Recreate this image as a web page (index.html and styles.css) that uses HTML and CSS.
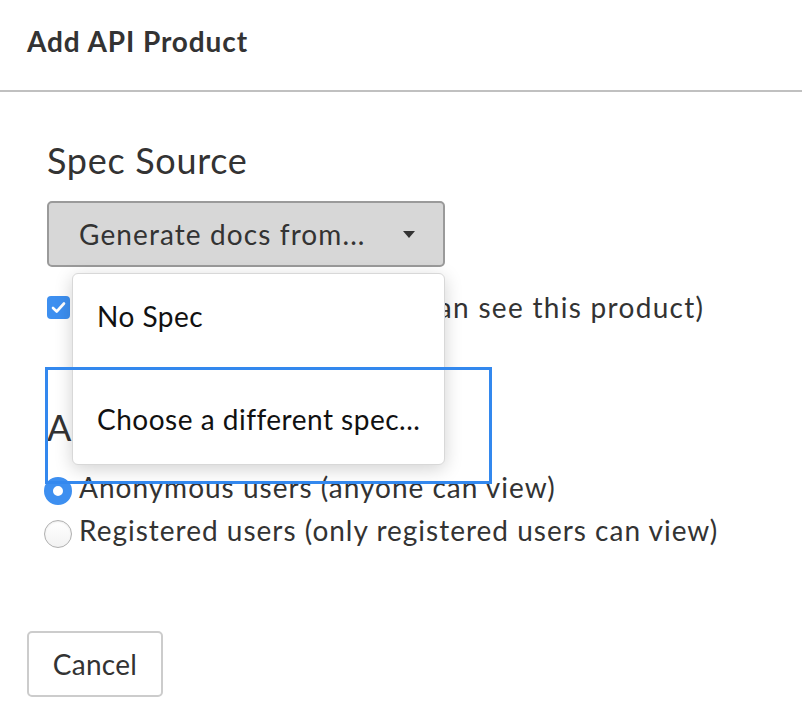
FILE: index.html
```html
<!DOCTYPE html>
<html lang="en">
<head>
<meta charset="utf-8">
<title>Add API Product</title>
<link rel="stylesheet" href="styles.css">
</head>
<body>
<div class="dialog">
  <header class="dialog-header">
    <h1 class="dialog-title">Add API Product</h1>
  </header>
  <main class="dialog-body">
    <h2 class="section-title">Spec Source</h2>
    <div class="select-wrap">
      <button class="select-btn" type="button">
        <span class="select-label">Generate docs from...</span>
        <span class="caret"></span>
      </button>
      <ul class="menu">
        <li class="menu-item">No Spec</li>
        <li class="menu-item menu-item-last">Choose a different spec...</li>
      </ul>
    </div>
    <label class="check-row">
      <span class="checkbox">
        <svg viewBox="0 0 23 23" width="23" height="23"><path d="M6 12 L9.7 15.5 L17 7.5" fill="none" stroke="#fff" stroke-width="2.6" stroke-linecap="round" stroke-linejoin="round"/></svg>
      </span>
      <span class="row-text check-text">Published (portal visitors can see this product)</span>
    </label>
    <h2 class="section-title audience-title">Audience</h2>
    <div class="radio-row">
      <span class="radio radio-on"></span>
      <span class="row-text">Anonymous users (anyone can view)</span>
    </div>
    <div class="radio-row">
      <span class="radio"></span>
      <span class="row-text">Registered users (only registered users can view)</span>
    </div>
  </main>
  <footer class="dialog-footer">
    <button class="btn-cancel" type="button">Cancel</button>
  </footer>
  <div class="focus-ring"></div>
</div>
</body>
</html>
```
FILE: styles.css
```css
* { box-sizing: border-box; }
html, body { margin: 0; padding: 0; background: #fff; }
body {
  font-family: Lato, "Open Sans", "Liberation Sans", sans-serif;
  color: #333;
  width: 802px;
  height: 720px;
  overflow: hidden;
}
.dialog { position: relative; height: 720px; }
.dialog-header {
  height: 92px;
  padding: 24px 27px 0;
  border-bottom: 2px solid #c0c0c0;
}
.dialog-title {
  margin: 0;
  font-size: 28px;
  line-height: 34px;
  font-weight: 700;
  letter-spacing: 0.9px;
  color: #333;
}
.dialog-body { padding: 0 47px; }
.section-title {
  margin: 46px 0 19px;
  font-size: 36px;
  line-height: 44px;
  font-weight: 400;
  letter-spacing: 0.7px;
  color: #333;
}
.select-wrap { position: relative; width: 398px; }
.select-btn {
  display: flex;
  align-items: center;
  justify-content: space-between;
  width: 398px;
  height: 66px;
  padding: 0 28px 0 30px;
  background: #d7d7d7;
  border: 2px solid #9a9a9a;
  border-radius: 5px;
  font-family: inherit;
  font-size: 28px;
  line-height: 34px;
  letter-spacing: 1.1px;
  color: #333;
}
.caret {
  width: 0; height: 0;
  border-left: 6px solid transparent;
  border-right: 6px solid transparent;
  border-top: 7px solid #333;
}
.menu {
  position: absolute;
  left: 25px;
  top: 72px;
  width: 373px;
  margin: 0;
  padding: 0;
  list-style: none;
  background: #fff;
  border: 1px solid #d8d8d8;
  border-radius: 6px;
  box-shadow: 0 4px 18px rgba(0,0,0,0.18);
  z-index: 5;
}
.menu-item {
  padding: 25px 24px 44px;
  font-size: 28px;
  line-height: 34px;
  letter-spacing: 0.5px;
  white-space: nowrap;
  color: #111;
}
.menu-item-last { padding-bottom: 28px; }
.check-row {
  display: flex;
  align-items: center;
  gap: 10px;
  margin-top: 20px;
  height: 40px;
}
.checkbox {
  display: flex;
  width: 23px; height: 23px;
  border-radius: 4px;
  background: #3d8ff0;
}
.row-text {
  font-size: 28px;
  line-height: 40px;
  letter-spacing: 1px;
  color: #333;
  white-space: nowrap;
}
.check-text { letter-spacing: 1.3px; }
.audience-title { margin: 78px 0 16px; }
.radio-row {
  display: flex;
  align-items: center;
  gap: 7px;
  margin-left: -3px;
  height: 43px;
}
.radio {
  width: 28px; height: 28px;
  margin-top: 9px;
  border-radius: 50%;
  border: 1.5px solid #b0b0b0;
  background: linear-gradient(#fff, #f2f2f2);
  box-shadow: inset 0 1px 2px rgba(0,0,0,0.08);
}
.radio-on {
  border: 9px solid #3d8ff0;
  background: #fff;
  box-shadow: none;
}
.dialog-footer { padding: 80px 27px 0; }
.btn-cancel {
  width: 136px;
  height: 66px;
  background: #fff;
  border: 2px solid #cccccc;
  border-radius: 5px;
  font-family: inherit;
  font-size: 28px;
  letter-spacing: 0.3px;
  color: #333;
}
.focus-ring {
  position: absolute;
  left: 45px;
  top: 367px;
  width: 447px;
  height: 117px;
  border: 3px solid #3388ee;
  pointer-events: none;
  z-index: 10;
}
```
